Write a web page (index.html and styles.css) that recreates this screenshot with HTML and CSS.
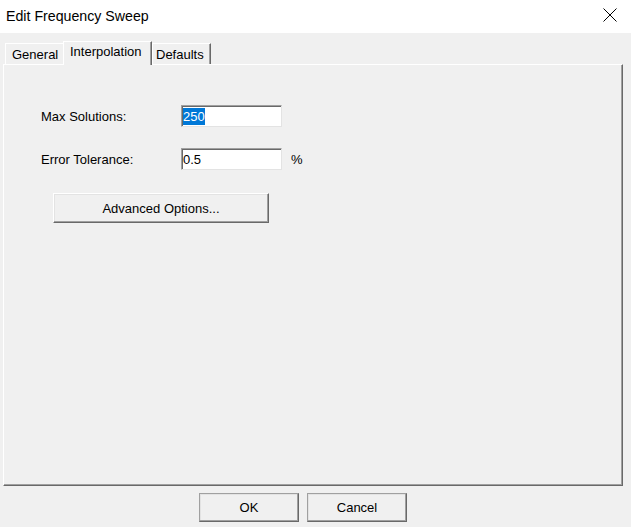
FILE: index.html
```html
<!DOCTYPE html>
<html>
<head>
<meta charset="utf-8">
<link rel="stylesheet" href="styles.css">
</head>
<body>
<div class="dialog">
  <div class="titlebar">
    <span class="title">Edit Frequency Sweep</span>
    <svg class="close" width="14" height="14" viewBox="0 0 14 14"><path d="M0.5 0.5 L13.5 13.5 M13.5 0.5 L0.5 13.5" stroke="#000" stroke-width="1" fill="none"/></svg>
  </div>
  <div class="tabs">
    <div class="tab t-general">General</div>
    <div class="tab active t-interp">Interpolation</div>
    <div class="tab t-defaults">Defaults</div>
  </div>
  <div class="panel">
    <div class="row">
      <span class="label">Max Solutions:</span>
      <div class="field"><span class="sel">250</span></div>
    </div>
    <div class="row row2">
      <span class="label">Error Tolerance:</span>
      <div class="field">0.5</div>
      <span class="unit">%</span>
    </div>
    <div class="btn adv">Advanced Options...</div>
  </div>
  <div class="footer">
    <div class="btn dlg">OK</div>
    <div class="btn dlg">Cancel</div>
  </div>
</div>
</body>
</html>
```

FILE: styles.css
```css
html, body {
  margin: 0;
  padding: 0;
  background: #f0f0f0;
  font-family: "Liberation Sans", Arial, sans-serif;
  font-size: 13px;
  color: #000;
}
.dialog {
  width: 631px;
  height: 527px;
  display: flex;
  flex-direction: column;
  overflow: hidden;
}
.titlebar {
  height: 33px;
  background: #fff;
  display: flex;
  align-items: center;
  justify-content: space-between;
  padding: 0 14px 0 6px;
  box-sizing: border-box;
}
.title {
  font-size: 14.2px;
  margin-top: -2px;
}
.close {
  display: block;
  margin-top: -4px;
}
.tabs {
  display: flex;
  align-items: flex-end;
  height: 23px;
  margin-top: 8px;
  padding-left: 5px;
  position: relative;
  z-index: 2;
}
.tab {
  height: 21px;
  box-sizing: border-box;
  padding: 3px 0 0 6px;
  border-top: 1px solid #fff;
  border-left: 1px solid #fff;
  border-right: 1px solid #696969;
  box-shadow: inset -1px 0 0 #a0a0a0;
  background: #f0f0f0;
  white-space: nowrap;
}
.t-general {
  width: 58px;
  border-right: none;
  box-shadow: none;
}
.t-interp {
  width: 89px;
}
.t-defaults {
  width: 59px;
  padding-left: 3px;
}
.tab.active {
  height: 24px;
  margin-bottom: -1px;
  padding-top: 2px;
  padding-left: 6px;
}
.panel {
  margin-left: 3px;
  width: 620px;
  height: 422px;
  box-sizing: border-box;
  border-top: 1px solid #fff;
  border-left: 1px solid #fff;
  border-right: 1px solid #696969;
  border-bottom: 1px solid #696969;
  box-shadow: inset -1px -1px 0 #a0a0a0;
  padding: 40px 0 0 37px;
  display: flex;
  flex-direction: column;
  align-items: flex-start;
}
.row {
  display: flex;
  align-items: center;
  height: 22px;
}
.row2 {
  margin-top: 21px;
}
.label {
  width: 140px;
}
.field {
  width: 101px;
  height: 22px;
  box-sizing: border-box;
  background: #fff;
  border-top: 1px solid #a0a0a0;
  border-left: 1px solid #a0a0a0;
  border-right: 1px solid #e3e3e3;
  border-bottom: 1px solid #e3e3e3;
  box-shadow: inset 1px 1px 0 #696969;
  padding: 2px 0 0 1px;
  line-height: 17px;
}
.sel {
  background: #0078d7;
  color: #fff;
  display: inline-block;
  height: 17px;
}
.unit {
  margin-left: 9px;
}
.btn {
  box-sizing: border-box;
  display: flex;
  align-items: center;
  justify-content: center;
  background: #f0f0f0;
  border-top: 1px solid #fff;
  border-left: 1px solid #fff;
  border-right: 1px solid #696969;
  border-bottom: 1px solid #696969;
  box-shadow: inset -1px -1px 0 #a0a0a0, inset 1px 1px 0 #e3e3e3;
}
.adv {
  margin-top: 23px;
  margin-left: 12px;
  width: 216px;
  height: 30px;
}
.footer {
  display: flex;
  gap: 8px;
  padding-left: 199px;
  margin-top: 7px;
}
.dlg {
  width: 100px;
  height: 29px;
  border-top-color: #a0a0a0;
  border-left-color: #a0a0a0;
}
```
